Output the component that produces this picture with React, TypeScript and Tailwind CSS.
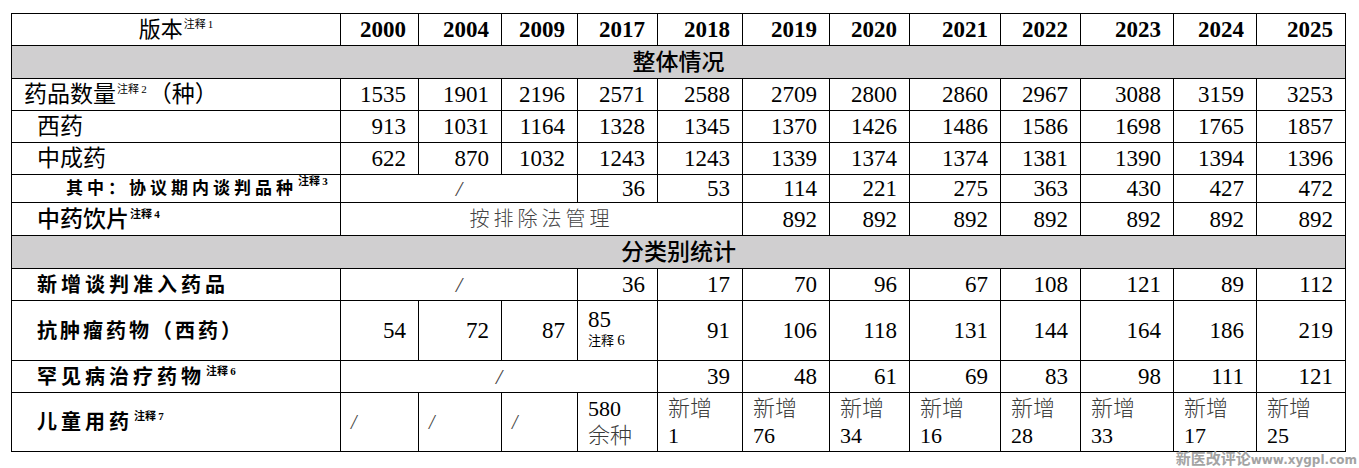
import React from "react";

const FONT = { fontFamily: '"Liberation Serif", "Noto Sans CJK SC", serif' };

const COLS = [329, 78, 83, 76, 80, 85, 87, 80, 91, 80, 93, 83, 89];
const YEARS = ["2000", "2004", "2009", "2017", "2018", "2019", "2020", "2021", "2022", "2023", "2024", "2025"];

const cell = "border border-black p-0 align-middle whitespace-nowrap overflow-hidden";
const num = "border border-black p-0 pr-[12px] text-right align-middle text-[23px] leading-none";

function Note({ n, bold }: { n: string; bold?: boolean }) {
  return (
    <sup className={bold ? "text-[11px] font-bold tracking-normal ml-[1px] -top-[9px]" : "text-[11px] font-normal tracking-normal ml-[1px] -top-[9px]"}>
      注释{"\u2009"}{n}
    </sup>
  );
}

function NumRow({ label, values, height }: { label: React.ReactNode; values: (string | number)[]; height: string }) {
  return (
    <tr className={height}>
      {label}
      {values.map((v, i) => (
        <td key={i} className={num}>{v}</td>
      ))}
    </tr>
  );
}

function Section({ title }: { title: string }) {
  return (
    <tr className="h-[33px] bg-[#d0cfd0]">
      <td colSpan={13} className="border border-black p-0 text-center align-middle text-[23px] font-medium leading-none">
        {title}
      </td>
    </tr>
  );
}

function KidsCell({ top, bottom, light }: { top: string; bottom: string; light?: boolean }) {
  return (
    <td className="border border-black p-0 pl-[10px] align-top">
      <div className="flex flex-col pt-[2px] text-[22px] leading-[27px]">
        <span className={light ? "font-light text-[#3a3a3a]" : ""}>{top}</span>
        <span className={light ? "" : "font-light text-[#3a3a3a]"}>{bottom}</span>
      </div>
    </td>
  );
}

export default function App() {
  return (
    <div className="w-[1359px] h-[468px] bg-white text-black overflow-hidden" style={FONT}>
      <div className="pt-[13px] pl-[11px]">
        <table className="table-fixed border-collapse w-[1334px]">
          <colgroup>
            {COLS.map((w, i) => (
              <col key={i} style={{ width: w }} />
            ))}
          </colgroup>
          <tbody>
            <tr className="h-[32px]">
              <td className={cell + " text-center text-[22px] leading-none"}>
                版本<Note n="1" />
              </td>
              {YEARS.map((y) => (
                <td key={y} className={num + " font-bold"}>{y}</td>
              ))}
            </tr>

            <Section title="整体情况" />

            <NumRow
              height="h-[32px]"
              label={
                <td className={cell + " pl-[12px] text-[23px] leading-none"}>
                  药品数量<Note n="2" /><span className="ml-[2px]">（种）</span>
                </td>
              }
              values={[1535, 1901, 2196, 2571, 2588, 2709, 2800, 2860, 2967, 3088, 3159, 3253]}
            />
            <NumRow
              height="h-[32px]"
              label={<td className={cell + " pl-[25px] text-[23px] leading-none"}>西药</td>}
              values={[913, 1031, 1164, 1328, 1345, 1370, 1426, 1486, 1586, 1698, 1765, 1857]}
            />
            <NumRow
              height="h-[32px]"
              label={<td className={cell + " pl-[25px] text-[23px] leading-none"}>中成药</td>}
              values={[622, 870, 1032, 1243, 1243, 1339, 1374, 1374, 1381, 1390, 1394, 1396]}
            />

            <tr className="h-[28px]">
              <td className={cell + " pl-[54px] text-[17px] font-bold tracking-[4px] leading-none"}>
                其中：协议期内谈判品种<Note n="3" bold />
              </td>
              <td colSpan={3} className={cell + " text-center text-[22px] font-light italic text-[#444] leading-none"}>/</td>
              {[36, 53, 114, 221, 275, 363, 430, 427, 472].map((v, i) => (
                <td key={i} className={num}>{v}</td>
              ))}
            </tr>

            <tr className="h-[33px]">
              <td className={cell + " pl-[25px] text-[23px] font-medium leading-none"}>
                中药饮片<Note n="4" bold />
              </td>
              <td colSpan={5} className={cell + " text-center text-[20px] font-light tracking-[4px] text-[#444] leading-none"}>
                按排除法管理
              </td>
              {Array.from({ length: 7 }).map((_, i) => (
                <td key={i} className={num}>892</td>
              ))}
            </tr>

            <Section title="分类别统计" />

            <tr className="h-[32px]">
              <td className={cell + " pl-[25px] text-[20px] font-bold tracking-[4px] leading-none"}>新增谈判准入药品</td>
              <td colSpan={3} className={cell + " text-center text-[22px] font-light italic text-[#444] leading-none"}>/</td>
              {[36, 17, 70, 96, 67, 108, 121, 89, 112].map((v, i) => (
                <td key={i} className={num}>{v}</td>
              ))}
            </tr>

            <tr className="h-[60px]">
              <td className={cell + " pl-[25px] text-[20px] font-bold tracking-[3px] leading-none"}>抗肿瘤药物（西药）</td>
              <td className={num}>54</td>
              <td className={num}>72</td>
              <td className={num}>87</td>
              <td className={cell + " pl-[10px]"}>
                <div className="flex flex-col pb-[4px]">
                  <span className="text-[23px] leading-[24px]">85</span>
                  <span className="text-[13px] leading-[16px]">
                    注释 <span className="text-[15px]">6</span>
                  </span>
                </div>
              </td>
              {[91, 106, 118, 131, 144, 164, 186, 219].map((v, i) => (
                <td key={i} className={num}>{v}</td>
              ))}
            </tr>

            <tr className="h-[32px]">
              <td className={cell + " pl-[25px] text-[20px] font-bold tracking-[4px] leading-none"}>
                罕见病治疗药物<Note n="6" bold />
              </td>
              <td colSpan={4} className={cell + " text-center text-[22px] font-light italic text-[#444] leading-none"}>/</td>
              {[39, 48, 61, 69, 83, 98, 111, 121].map((v, i) => (
                <td key={i} className={num}>{v}</td>
              ))}
            </tr>

            <tr className="h-[59px]">
              <td className={cell + " pl-[25px] text-[20px] font-bold tracking-[4px] leading-none"}>
                儿童用药<Note n="7" bold />
              </td>
              {[0, 1, 2].map((i) => (
                <td key={i} className={cell + " pl-[10px] text-[20px] font-light italic text-[#444] leading-none"}>/</td>
              ))}
              <KidsCell top="580" bottom="余种" />
              {["1", "76", "34", "16", "28", "33", "17", "25"].map((v, i) => (
                <KidsCell key={i} top="新增" bottom={v} light />
              ))}
            </tr>
          </tbody>
        </table>
      </div>
      <div className="flex justify-end pr-[2px]">
        <span className="text-[15px] font-bold leading-[15px] text-[#a3a3a3]" style={{ fontFamily: '"DejaVu Sans", "Noto Sans CJK SC", sans-serif' }}>
          新医改评论<span className="text-[12px]">www.xygpl.com</span>
        </span>
      </div>
    </div>
  );
}
